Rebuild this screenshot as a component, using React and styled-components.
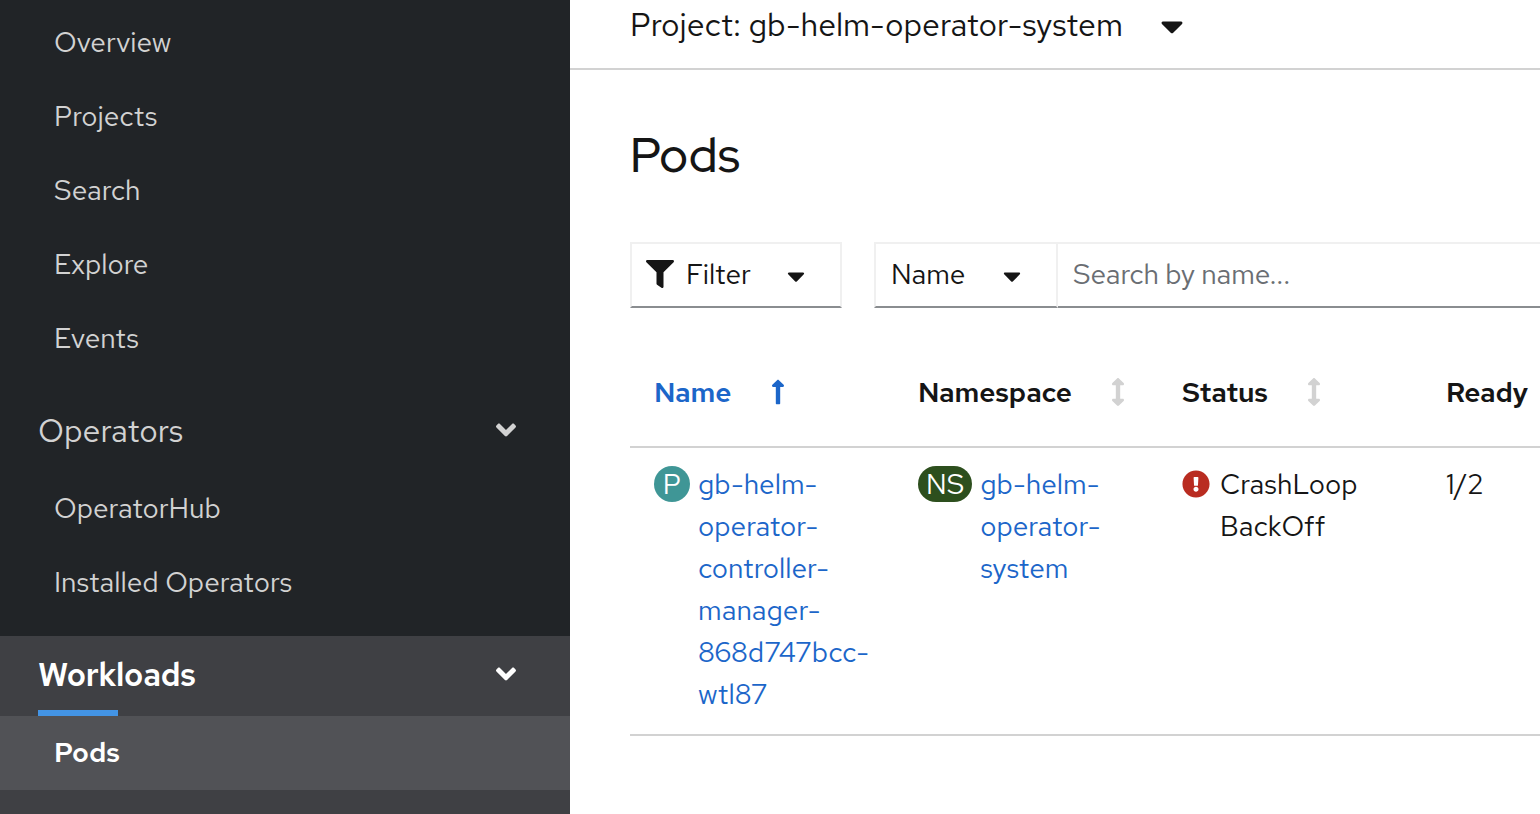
import React from "react"
import styled, { createGlobalStyle } from "styled-components"
import {
  FaAngleDown,
  FaArrowsAltV,
  FaCaretDown,
  FaExclamationCircle,
  FaFilter,
  FaLongArrowAltUp,
} from "react-icons/fa"

const Global = createGlobalStyle`
  html, body { margin: 0; padding: 0; height: 100%; overflow: hidden; }
  body { font-family: "Red Hat Text", "Open Sans", "Noto Sans", sans-serif; background: #fff; }
`

const Page = styled.div`
  display: flex;
  width: 1540px;
  height: 814px;
  overflow: hidden;
`
const Side = styled.nav`
  width: 570px;
  flex: none;
  background: #212427;
  display: flex;
  flex-direction: column;
  padding-top: 5px;
  box-sizing: border-box;
`
const SubItem = styled.div`
  height: 74px;
  flex: none;
  display: flex;
  align-items: center;
  box-sizing: border-box;
  padding: 0 0 ${p => (p.$active ? 2 : 0)}px 54px;
  font-size: 28px;
  color: ${p => (p.$active ? "#fff" : "#d2d2d2")};
  font-weight: ${p => (p.$active ? 600 : 400)};
  background: ${p => (p.$active ? "#515256" : "transparent")};
`
const Group = styled.div`
  height: ${p => p.$h}px;
  flex: none;
  margin-top: ${p => p.$mt || 0}px;
  padding: ${p => p.$pt || 0}px 48px ${p => p.$pb || 0}px 38px;
  display: flex;
  align-items: center;
  justify-content: space-between;
  font-size: 32px;
  letter-spacing: ${p => (p.$active ? "-0.3px" : "0")};
  color: ${p => (p.$active ? "#fff" : "#d2d2d2")};
  font-weight: ${p => (p.$active ? 600 : 400)};
  background: ${p => (p.$active ? "#3f4044" : "transparent")};
  position: relative;
  box-sizing: border-box;
`
const Chevron = styled(FaAngleDown)`
  font-size: 32px;
  color: ${p => (p.$active ? "#fff" : "#d2d2d2")};
`
const Underline = styled.span`
  position: absolute;
  left: 38px;
  bottom: 0;
  width: 80px;
  height: 6px;
  background: #4394e5;
`
const Tail = styled.div`
  flex: 1;
  background: #3f4044;
`
const Main = styled.main`
  flex: 1;
  display: flex;
  flex-direction: column;
  min-width: 0;
`
const TopBar = styled.div`
  height: 48px;
  padding: 0 0 20px 60px;
  border-bottom: 2px solid #d2d2d2;
  display: flex;
  align-items: center;
  font-size: 32px;
  letter-spacing: -0.03px;
  color: #151515;
  gap: 31px;
`
const TopCaret = styled(FaCaretDown)`
  font-size: 36px;
  margin-top: 4px;
`
const Content = styled.div`
  padding: 0 0 0 60px;
`
const Title = styled.h1`
  margin: 51px 0 53px;
  font-family: "Red Hat Display", "Red Hat Text", "Open Sans", sans-serif;
  font-size: 48px;
  line-height: 68px;
  font-weight: 500;
  letter-spacing: 0.7px;
  color: #151515;
`
const Toolbar = styled.div`
  display: flex;
  height: 66px;
`
const Select = styled.div`
  width: ${p => p.$w}px;
  box-sizing: border-box;
  border: 2px solid #f0f0f0;
  border-bottom-color: #8a8d90;
  display: flex;
  align-items: center;
  font-size: 28px;
  color: #151515;
  padding: 0 0 2px ${p => p.$pl}px;
  margin-right: ${p => p.$mr || 0}px;
`
const FilterIcon = styled(FaFilter)`
  font-size: 28px;
  margin-right: 12px;
`
const Caret = styled(FaCaretDown)`
  font-size: 28px;
  margin: 4px 0 0 ${p => p.$ml}px;
`
const Search = styled.div`
  flex: 1;
  border: 2px solid #f0f0f0;
  border-left: none;
  border-right: none;
  border-bottom-color: #8a8d90;
  display: flex;
  align-items: center;
  padding: 0 0 2px 15px;
  font-size: 28px;
  letter-spacing: -0.12px;
  color: #6a6e73;
`
const Table = styled.div`
  margin-top: 32px;
  width: 910px;
`
const Row = styled.div`
  display: grid;
  grid-template-columns: 264px 264px 264px 1fr;
  padding-left: 24px;
  border-bottom: 2px solid #d2d2d2;
`
const Head = styled.div`
  height: 104px;
  padding-bottom: 2px;
  display: flex;
  align-items: center;
  font-size: 28px;
  font-weight: 600;
  letter-spacing: -0.15px;
  color: ${p => (p.$on ? "#1c66c9" : "#151515")};
  white-space: nowrap;
`
const SortIcon = styled.span`
  display: inline-flex;
  margin-left: ${p => p.$ml}px;
  font-size: 28px;
  color: ${p => (p.$on ? "#1c66c9" : "#d2d2d2")};
`
const Cell = styled.div`
  display: flex;
  align-items: flex-start;
  padding: 15px 0 19px;
  font-size: 28px;
  line-height: 42px;
  color: #151515;
`
const Link = styled.a`
  color: #1c66c9;
  width: ${p => p.$w}px;
`
const Badge = styled.span`
  flex: none;
  height: 36px;
  min-width: 36px;
  padding: 0 ${p => (p.$wide ? 8 : 0)}px;
  box-sizing: border-box;
  margin: 3px 8px 0 0;
  border-radius: 18px;
  background: ${p => p.$bg};
  color: #fff;
  display: flex;
  align-items: center;
  justify-content: center;
  font-size: 28px;
`
const StatusIcon = styled(FaExclamationCircle)`
  flex: none;
  font-size: 28px;
  color: #b92c21;
  margin: 7px 10px 0 0;
`
const StatusText = styled.span`
  width: 150px;
`

const App = () => (
  <Page>
    <Global />
    <Side>
      {["Overview", "Projects", "Search", "Explore", "Events"].map(n => <SubItem key={n}>{n}</SubItem>)}
      <Group $h={96} $pt={14}>Operators<Chevron /></Group>
      <SubItem>OperatorHub</SubItem>
      <SubItem>Installed Operators</SubItem>
      <Group $h={80} $mt={17} $pb={4} $active>Workloads<Chevron $active /><Underline /></Group>
      <SubItem $active>Pods</SubItem>
      <Tail />
    </Side>
    <Main>
      <TopBar>Project: gb-helm-operator-system <TopCaret /></TopBar>
      <Content>
        <Title>Pods</Title>
        <Toolbar>
          <Select $w={212} $pl={14} $mr={32}><FilterIcon />Filter<Caret $ml={31} /></Select>
          <Select $w={184} $pl={15}>Name<Caret $ml={33} /></Select>
          <Search>Search by name...</Search>
        </Toolbar>
        <Table>
          <Row>
            <Head $on>Name<SortIcon $on $ml={33}><FaLongArrowAltUp /></SortIcon></Head>
            <Head>Namespace<SortIcon $ml={32}><FaArrowsAltV /></SortIcon></Head>
            <Head>Status<SortIcon $ml={32}><FaArrowsAltV /></SortIcon></Head>
            <Head>Ready</Head>
          </Row>
          <Row>
            <Cell><Badge $bg="#3f9696">P</Badge><Link $w={180}>gb-helm-operator-controller-manager-868d747bcc-wtl87</Link></Cell>
            <Cell><Badge $bg="#2d4f1e" $wide>NS</Badge><Link $w={130}>gb-helm-operator-system</Link></Cell>
            <Cell><StatusIcon /><StatusText>CrashLoop BackOff</StatusText></Cell>
            <Cell>1/2</Cell>
          </Row>
        </Table>
      </Content>
    </Main>
  </Page>
)

export default App
